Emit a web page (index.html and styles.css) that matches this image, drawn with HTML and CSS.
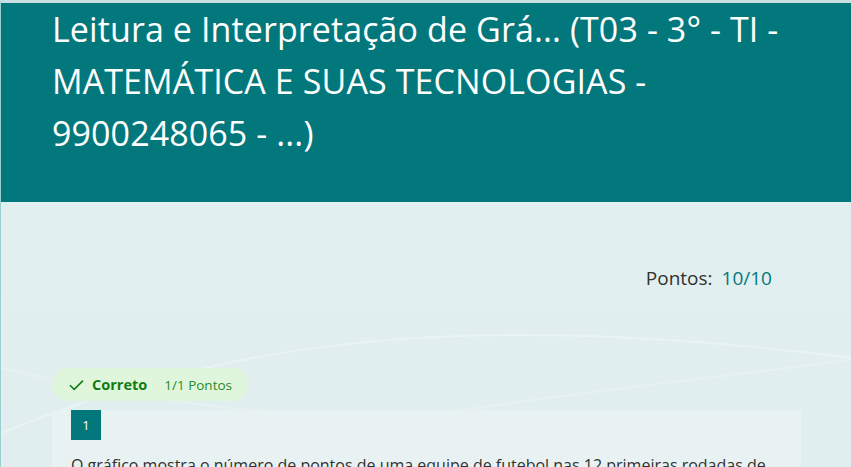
FILE: index.html
```html
<!DOCTYPE html>
<html lang="pt">
<head>
<meta charset="utf-8">
<link rel="stylesheet" href="styles.css">
</head>
<body>
<div class="page">
  <svg class="waves" width="851" height="467" viewBox="0 0 851 467" aria-hidden="true">
    <path d="M0 430 C 200 350, 420 300, 851 355" fill="none" stroke="#ffffff" stroke-opacity="0.3" stroke-width="2"/>
    <path d="M0 365 C 150 400, 300 420, 460 412" fill="none" stroke="#ffffff" stroke-opacity="0.2" stroke-width="2"/>
    <path d="M430 412 C 600 385, 760 370, 851 356" fill="none" stroke="#ffffff" stroke-opacity="0.2" stroke-width="2"/>
  </svg>
  <header class="header">
    <h1 class="title">Leitura e Interpretação de Grá... (T03 - 3° - TI -<br>MATEMÁTICA E SUAS TECNOLOGIAS -<br>9900248065 - ...)</h1>
  </header>
  <main class="content">
    <div class="score-row">
      <span class="score-label">Pontos:</span>
      <span class="score-value">10/10</span>
    </div>
    <div class="badge">
      <svg class="check" width="15" height="12" viewBox="0 0 15 12"><path d="M1 6.2 L5.2 10.4 L14 1.6" fill="none" stroke="#107c10" stroke-width="1.5"/></svg>
      <span class="badge-status">Correto</span>
      <span class="badge-points">1/1 Pontos</span>
    </div>
    <section class="card">
      <div class="qnum">1</div>
      <p class="qtext">O gráfico mostra o número de pontos de uma equipe de futebol nas 12 primeiras rodadas de</p>
    </section>
  </main>
</div>
</body>
</html>
```
FILE: styles.css
```css
html, body {
  margin: 0;
  padding: 0;
}
body {
  font-family: "Segoe UI", "Open Sans", "Noto Sans", sans-serif;
  background: #e2eff0;
  overflow: hidden;
}
.page {
  position: relative;
  height: 467px;
  overflow: hidden;
  border-top: 3px solid #c9dfe0;
  border-left: 1px solid #9ccfd0;
  background: linear-gradient(#e3f0f0, #e1eeef);
  box-sizing: border-box;
}
.waves {
  position: absolute;
  left: 0;
  top: 0;
  pointer-events: none;
}
.header {
  position: relative;
  height: 199px;
  background: #03787c;
  padding: 0 0 0 51px;
  box-sizing: border-box;
}
.title {
  margin: 0;
  color: #ffffff;
  font-weight: 400;
  font-size: 34px;
  line-height: 52px;
  letter-spacing: 0.1px;
}
.content {
  position: relative;
  width: 749px;
  margin-left: 51px;
}
.score-row {
  display: flex;
  justify-content: flex-end;
  gap: 9px;
  padding: 64px 29px 0 0;
  font-size: 19px;
  line-height: 24px;
}
.score-label { color: #323130; }
.score-value { color: #03787c; }
.badge {
  display: inline-flex;
  align-items: center;
  height: 33px;
  margin-top: 78px;
  padding: 0 16px 0 17px;
  border-radius: 17px;
  background: #dff6dd;
  box-sizing: border-box;
}
.check { margin-right: 8px; }
.badge-status {
  color: #107c10;
  font-weight: 700;
  font-size: 14.5px;
}
.badge-points {
  margin-left: 17px;
  color: #2a8a2a;
  font-size: 13.5px;
}
.card {
  background: #e8f2f3;
  margin-top: 9px;
  padding: 0 19px 20px;
  min-height: 100px;
}
.qnum {
  width: 30px;
  height: 30px;
  background: #03787c;
  color: #fff;
  font-size: 13px;
  display: flex;
  align-items: center;
  justify-content: center;
}
.qtext {
  margin: 14px 0 0;
  color: #323130;
  font-size: 16px;
  line-height: 22px;
}
```
